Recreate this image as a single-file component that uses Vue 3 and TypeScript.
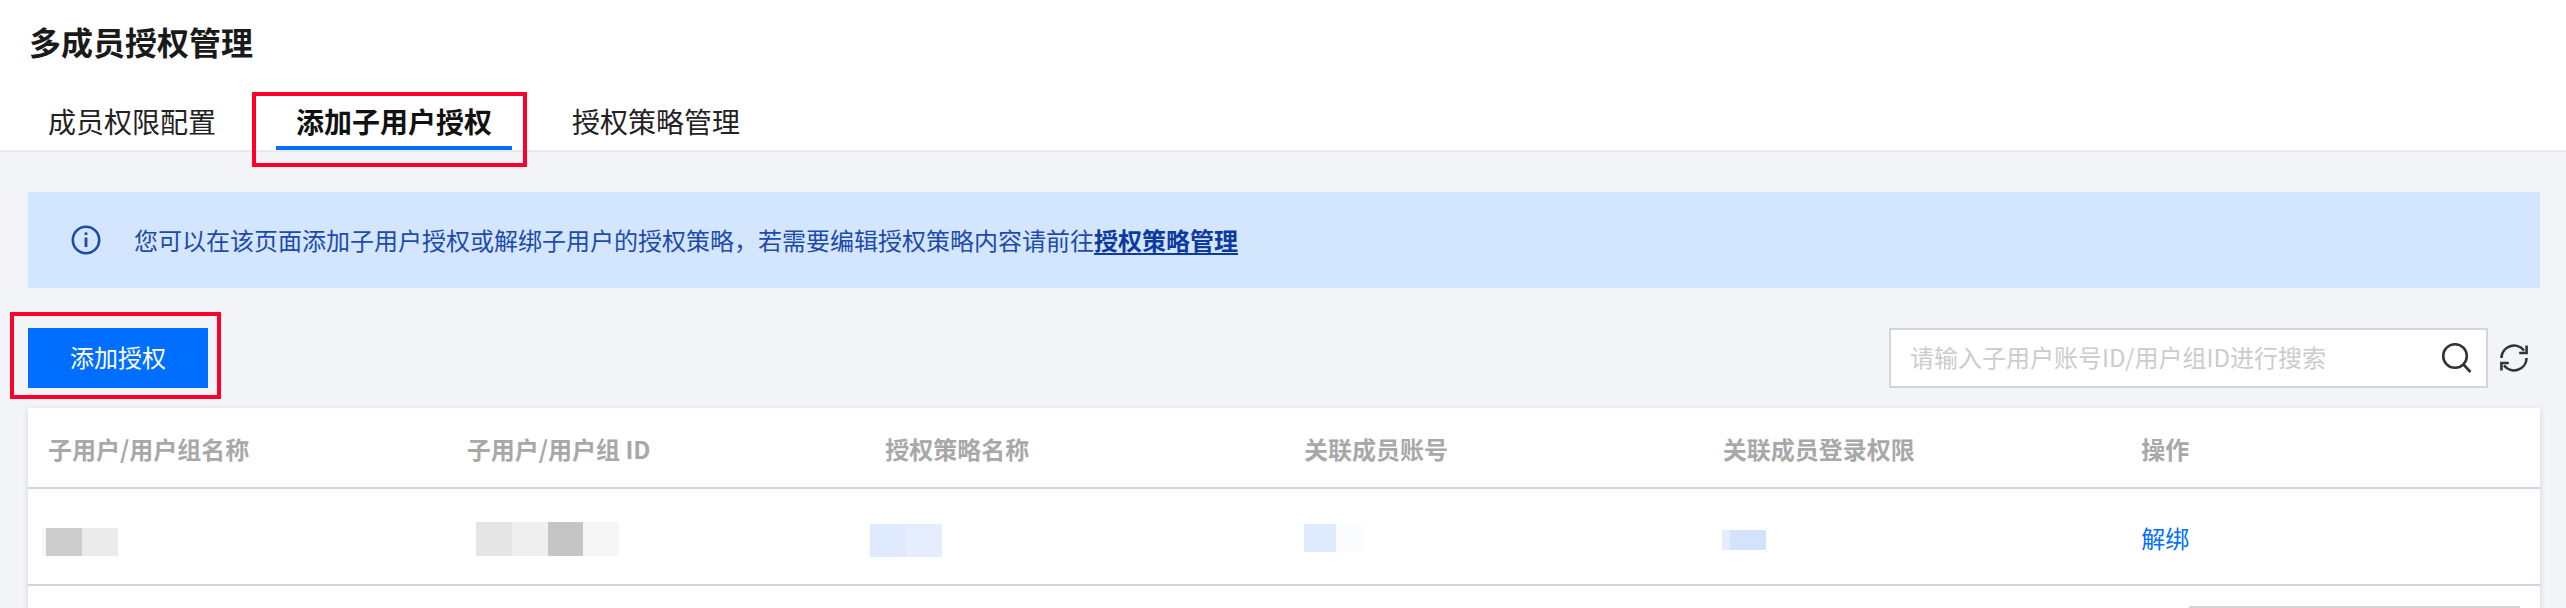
<template>
  <div class="page">
    <header class="head">
      <h1 class="title">多成员授权管理</h1>
      <nav class="tabs">
        <a v-for="tab in tabs" :key="tab" :class="['tab', { active: tab === activeTab }]">
          {{ tab }}
          <i v-if="tab === activeTab" class="mark tab-mark"></i>
        </a>
      </nav>
    </header>

    <main class="content">
      <div class="alert">
        <svg class="info-icon" viewBox="0 0 30 30" fill="none" stroke="#1c4bab">
          <circle cx="15" cy="15" r="13.2" stroke-width="2.6" />
          <path d="M15 12.5V22" stroke-width="2.8" />
          <path d="M15 7.4V10" stroke-width="2.8" />
        </svg>
        <p class="alert-text">
          您可以在该页面添加子用户授权或解绑子用户的授权策略，若需要编辑授权策略内容请前往<a class="alert-link">授权策略管理</a>
        </p>
      </div>

      <div class="toolbar">
        <div class="add-wrap">
          <button class="add-btn">添加授权</button>
          <i class="mark add-mark"></i>
        </div>
        <div class="search">
          <input class="search-input" placeholder="请输入子用户账号ID/用户组ID进行搜索" />
          <svg class="search-icon" viewBox="0 0 32 32" fill="none" stroke="#333" stroke-width="2.6">
            <circle cx="14" cy="15" r="11.8" />
            <path d="M22.5 23.5L29.5 31" />
          </svg>
        </div>
        <svg class="refresh-icon" viewBox="0 0 28 28" fill="none" stroke="#333" stroke-width="2.6">
          <path d="M1.4 14A12.6 12.6 0 0 1 24 6.6" />
          <path d="M26.6 1.5V9H19.2" />
          <path d="M26.6 14A12.6 12.6 0 0 1 4 21.4" />
          <path d="M1.4 26.5V19H8.8" />
        </svg>
      </div>

      <section class="table">
        <div class="row head-row">
          <div v-for="col in columns" :key="col" class="th">{{ col }}</div>
        </div>
        <div class="row body-row">
          <div v-for="(cell, i) in patches" :key="i" class="td">
            <div class="patch" :style="{ marginLeft: cell.left + 'px', marginTop: cell.top + 'px' }">
              <span
                v-for="(seg, j) in cell.segs"
                :key="j"
                :style="{ width: seg[0] + 'px', height: cell.height + 'px', background: seg[1] }"
              ></span>
            </div>
          </div>
          <div class="td action"><a class="unbind">解绑</a></div>
        </div>
        <div class="pager-wrap">
          <div class="pager"></div>
        </div>
      </section>
    </main>
  </div>
</template>

<script setup lang="ts">
const tabs = ['成员权限配置', '添加子用户授权', '授权策略管理']
const activeTab = '添加子用户授权'
const columns = ['子用户/用户组名称', '子用户/用户组 ID', '授权策略名称', '关联成员账号', '关联成员登录权限', '操作']

// 打码的色块
const patches: { left: number; top: number; height: number; segs: [number, string][] }[] = [
  { left: 14, top: 39, height: 28, segs: [[4, '#f7f7f7'], [36, '#cdcdcd'], [36, '#ebebeb']] },
  { left: 29, top: 33, height: 34, segs: [[36, '#e5e5e5'], [36, '#efefef'], [35, '#c5c5c5'], [36, '#f6f6f6']] },
  { left: 5, top: 35, height: 33, segs: [[36, '#e0eafe'], [36, '#e6eefe']] },
  { left: 20, top: 35, height: 28, segs: [[32, '#deeafe'], [28, '#fbfcfe']] },
  { left: 19, top: 41, height: 20, segs: [[8, '#e3edfe'], [36, '#d3e3fe']] }
]
</script>

<style>
html, body { margin: 0; background: #f3f4f8; }
</style>

<style scoped>
.page {
  width: 2566px; height: 608px; overflow: hidden; background: #f3f4f8;
  font-family: "Noto Sans CJK SC", "Liberation Sans", sans-serif;
}
.head { height: 150px; background: #fff; border-bottom: 2px solid #e7eaef; box-sizing: content-box; }
.title { margin: 0; padding: 23px 0 0 29px; font-size: 32px; line-height: 36px; height: 36px; font-weight: 700; color: #1a1a1a; }
.tabs { display: flex; gap: 40px; padding: 38px 0 0 28px; }
.tab { position: relative; padding: 0 20px; height: 53px; font-size: 28px; line-height: 49px; color: #222; }
.tab.active { font-weight: 700; color: #111; }
.tab.active::after { content: ""; position: absolute; left: 0; right: 0; bottom: 0; height: 4px; background: #006eff; }
.mark { position: absolute; border: 4px solid #ff002b; box-sizing: border-box; pointer-events: none; }
.tab-mark { left: -24px; top: -5px; width: 275px; height: 75px; }

.content { padding: 40px 26px 0 28px; }
.alert { height: 96px; display: flex; align-items: center; background: #d4e5fe; }
.info-icon { width: 30px; height: 30px; margin-left: 43px; flex: none; }
.alert-text { margin: 0 0 0 33px; font-size: 24px; line-height: 36px; color: #1c4bab; }
.alert-link { font-weight: 700; color: #0d3a9e; text-decoration: underline; text-underline-offset: 3px; }

.toolbar { display: flex; align-items: center; height: 60px; margin-top: 40px; }
.add-wrap { position: relative; }
.add-btn {
  display: block; width: 180px; height: 60px; border: 0; padding: 0 0 3px; background: #006eff; color: #fff;
  font-family: inherit; font-size: 24px;
}
.add-mark { left: -18px; top: -16px; width: 211px; height: 87px; }
.search {
  position: relative; width: 599px; height: 60px; margin-left: auto; background: #fff;
  border: 2px solid #cfd6e0; box-sizing: border-box;
}
.search-input {
  width: 100%; height: 100%; border: 0; outline: 0; padding: 0 60px 3px 19px; box-sizing: border-box;
  background: transparent; font-family: inherit; font-size: 24px;
}
.search-input::placeholder { color: #cccccc; opacity: 1; }
.search-icon { position: absolute; right: 13px; top: 11px; width: 32px; height: 32px; }
.refresh-icon { width: 28px; height: 28px; margin-left: 12px; margin-right: 12px; flex: none; }

.table { margin-top: 20px; background: #fff; box-shadow: 0 2px 6px rgba(54, 58, 80, 0.18); }
.row { display: grid; grid-template-columns: repeat(6, 1fr); border-bottom: 2px solid #cfd3df; }
.head-row { height: 79px; }
.body-row { height: 95px; }
.th { padding-left: 20px; font-size: 24px; line-height: 81px; font-weight: 700; color: #a8a8a8; }
.td { min-width: 0; }
.patch { display: flex; }
.patch span { display: block; }
.action { padding-left: 20px; line-height: 97px; font-size: 24px; }
.unbind { color: #006eff; }
.pager-wrap { display: flex; justify-content: flex-end; padding: 20px 20px 0 0; }
.pager { width: 331px; height: 60px; border: 2px solid #cfd3df; box-sizing: border-box; }
</style>
